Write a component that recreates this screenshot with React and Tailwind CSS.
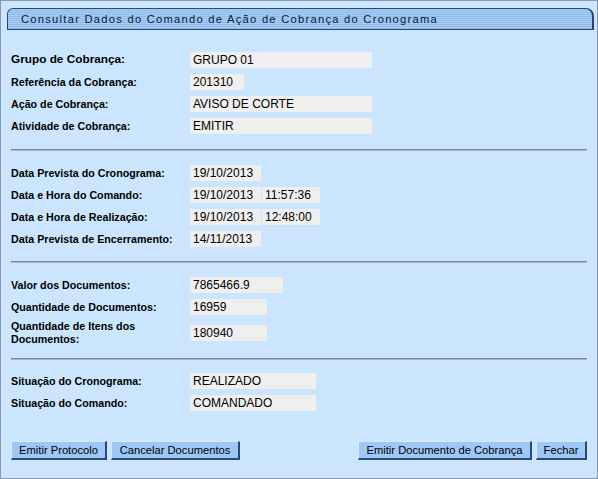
import React from "react";

const labelCls = "w-[179px] shrink-0 font-bold text-[10.7px] leading-[13px] text-black";
const boxCls = "h-[16px] bg-[#efefef] pl-[3px] text-[12px] leading-[16px] text-black whitespace-nowrap overflow-hidden";

function Field({ label, values, big, tall }) {
  return (
    <div className={`flex items-center ${tall ? "h-[30px]" : "h-[22px]"}`}>
      <div className={big ? "w-[179px] shrink-0 font-bold text-[11.8px] text-black" : labelCls}>{label}</div>
      <div className="flex gap-[1px]">
        {values.map((v, i) => (
          <div key={i} className={boxCls} style={{ width: v.w }}>
            {v.t}
          </div>
        ))}
      </div>
    </div>
  );
}

function Divider({ mt }) {
  return <div className={`${mt} mr-[10px] h-[2px] border-t border-[#7e8896] bg-[#a9b6c6]`} />;
}

function Btn({ children, w }) {
  return (
    <button
      className="h-[19px] bg-[#9dc8f5] border-t border-l border-t-[#d6e9ff] border-l-[#d6e9ff] border-r-2 border-b-2 border-r-[#2c4877] border-b-[#2c4877] text-[11.2px] leading-[15px] text-black"
      style={{ width: w }}
    >
      {children}
    </button>
  );
}

export default function App() {
  return (
    <div
      className="w-[598px] h-[479px] bg-[#cbe5fe] border border-[#8c99ab] overflow-hidden"
      style={{ fontFamily: '"Liberation Sans", Arial, sans-serif' }}
    >
      {/* Title tab */}
      <div className="mt-[7px] ml-[6px] w-[587px] h-[22px] rounded-tl-[6px] rounded-tr-[8px] border border-[#2a4575] border-r-2 bg-[repeating-linear-gradient(180deg,#a9cdf4_0px,#a9cdf4_1px,#8fbbeb_1px,#8fbbeb_2px)] flex items-center pl-[13px]">
        <span className="text-[11.2px] tracking-[1.25px] text-[#0a1a33]">
          Consultar Dados do Comando de Ação de Cobrança do Cronograma
        </span>
      </div>

      <div className="pl-[10px]">
        {/* Grupo */}
        <div className="mt-[19px]">
          <Field big label="Grupo de Cobrança:" values={[{ t: "GRUPO 01", w: 182 }]} />
          <Field label="Referência da Cobrança:" values={[{ t: "201310", w: 54 }]} />
          <Field label="Ação de Cobrança:" values={[{ t: "AVISO DE CORTE", w: 182 }]} />
          <Field label="Atividade de Cobrança:" values={[{ t: "EMITIR", w: 182 }]} />
        </div>

        <Divider mt="mt-[12px]" />

        <div className="mt-[11px]">
          <Field label="Data Prevista do Cronograma:" values={[{ t: "19/10/2013", w: 71 }]} />
          <Field label="Data e Hora do Comando:" values={[{ t: "19/10/2013", w: 71 }, { t: "11:57:36", w: 58 }]} />
          <Field label="Data e Hora de Realização:" values={[{ t: "19/10/2013", w: 71 }, { t: "12:48:00", w: 58 }]} />
          <Field label="Data Prevista de Encerramento:" values={[{ t: "14/11/2013", w: 71 }]} />
        </div>

        <Divider mt="mt-[11px]" />

        <div className="mt-[11px]">
          <Field label="Valor dos Documentos:" values={[{ t: "7865466.9", w: 93 }]} />
          <Field label="Quantidade de Documentos:" values={[{ t: "16959", w: 77 }]} />
          <Field
            tall
            label={
              <>
                Quantidade de Itens dos
                <br />
                Documentos:
              </>
            }
            values={[{ t: "180940", w: 77 }]}
          />
        </div>

        <Divider mt="mt-[10px]" />

        <div className="mt-[10px]">
          <Field label="Situação do Cronograma:" values={[{ t: "REALIZADO", w: 126 }]} />
          <Field label="Situação do Comando:" values={[{ t: "COMANDADO", w: 126 }]} />
        </div>

        {/* Buttons */}
        <div className="mt-[27px] mr-[10px] flex justify-between">
          <div className="flex gap-[4px]">
            <Btn w={96}>Emitir Protocolo</Btn>
            <Btn w={129}>Cancelar Documentos</Btn>
          </div>
          <div className="flex gap-[4px]">
            <Btn w={174}>Emitir Documento de Cobrança</Btn>
            <Btn w={51}>Fechar</Btn>
          </div>
        </div>
      </div>
    </div>
  );
}
